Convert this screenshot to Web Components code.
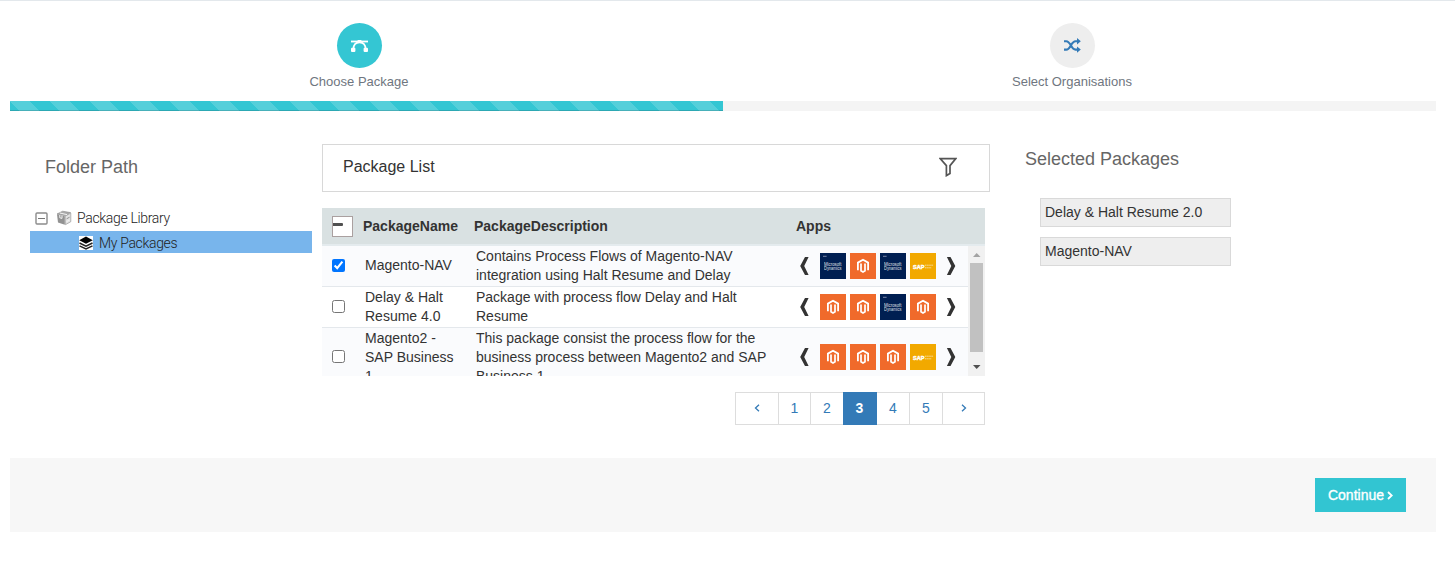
<!DOCTYPE html>
<html lang="en"><head><meta charset="utf-8"><title>Package Sharing</title>
<style>html,body{margin:0;background:#fff}body{font-family:"Liberation Sans",Arial,sans-serif;font-size:14px;color:#333}</style></head>
<body><package-wizard></package-wizard>
<script>
function define(name, css, html) {
  customElements.define(name, class extends HTMLElement {
    constructor() {
      super();
      this.attachShadow({ mode: 'open' }).innerHTML = `<style>*{box-sizing:border-box}${css}</style>` + (typeof html === 'function' ? html(this) : html);
    }
  });
}

define('wizard-step', `
:host{display:flex;flex-direction:column;align-items:center;padding:22px 14px 0 0;height:100px;box-sizing:border-box;color:#6f7680}
.c{width:45px;height:45px;border-radius:50%;background:#eee;display:flex;align-items:center;justify-content:center}
:host([active]) .c{background:#34c6d3}
.l{font-size:13px;line-height:18px;margin:5px 1px 0 0}`,
'<div class="c"><slot name="icon"></slot></div><div class="l"><slot></slot></div>');

define('step-progress', `
:host{display:block;height:10px;background:#f4f4f4}
div{width:50%;height:10px;background:linear-gradient(45deg,rgba(255,255,255,.16) 25%,transparent 25%,transparent 50%,rgba(255,255,255,.16) 50%,rgba(255,255,255,.16) 75%,transparent 75%) 0 0/40px 40px #34c6d3;box-shadow:inset 0 -1px 0 rgba(0,0,0,.15)}`, '<div></div>');

define('folder-tree', `
:host{display:block;width:282px}
h2{font-weight:400;font-size:18px;line-height:22px;margin:12px 0 0 15px;color:#666}
.r{height:22px;display:flex;align-items:center;font:300 14px/22px Roboto,sans-serif;color:#222;letter-spacing:-.33px}
.a{margin-top:29px;padding-left:5px;height:22px}
.b{margin-top:2px;background:#78b5ec;padding-left:49px}
.b svg,.b span{margin-top:2px}
.a .box{margin:0 5px 0 8px}.b svg{margin-right:6px}`,
`<h2>Folder Path</h2>
<div class="r a"><svg width="13" height="13"><rect x="1" y="1" width="11" height="11" rx="1" fill="#fff" stroke="#8c8c8c" stroke-width="1.4"/><path d="M3 6.5h7" stroke="#777"/></svg>
<svg class="box" width="16" height="16" viewBox="0 0 16 16"><path d="M1 4 6.6 1.2l8 1.4-5.4 3.2z" fill="#aaa" stroke="#888" stroke-width=".6"/><path d="m1 4.2 7.8 2v8.6L2 12.4z" fill="#929292"/><path d="m9.2 6.2 5.6-3.1v8.6l-5.4 3z" fill="#e2e2e2" stroke="#999" stroke-width=".7"/><path d="m3.8 3 7.2 1.6M3.8 5v2.8l2.2.6V5.6M10.6 11.6l3-1.5" stroke="#f4f4f4" fill="none"/><path d="m10.6 8.8 3-1.6" stroke="#888" stroke-width=".9"/></svg><span>Package Library</span></div>
<div class="r b"><svg width="14" height="14" viewBox="0 0 14 14"><path fill="#fff" d="M0 0h14v14H0z"/><path d="m7 .6 6.8 3.6L7 7.8.2 4.2z"/><path d="m.5 7 6.5 3.2L13.5 7M.5 9.8 7 13l6.5-3.2" fill="none" stroke="#222" stroke-width="1.5"/></svg><span>My Packages</span></div>`);

define('list-toolbar', `
:host{display:flex;box-sizing:border-box;width:668px;height:48px;border:1px solid #d8d8d8;align-items:center;justify-content:space-between;padding:0 32px 2px 20px;font-size:16px}
svg{display:block}`,
`<slot></slot><svg width="18" height="20" viewBox="0 0 18 20"><path d="M1.2 1.6h15.6L11 8.6v7.8L7.4 18.6v-10z" fill="none" stroke="#555" stroke-width="1.7"/></svg>`);

define('app-icon', `:host,svg{display:block}:host{width:26px;height:26px}text{font-family:"Liberation Sans",Arial,sans-serif;fill:#fff}`, el => ({
m: '<svg width="26" height="26"><path fill="#f06a2b" d="M0 0h26v26H0z"/><path d="M7.9 17.2V9.6L13 6.7l5.1 2.9v7.6" fill="none" stroke="#fff" stroke-width="1.8"/><path d="M11 10.4v7.4l2 1.2 2-1.2v-7.4" fill="none" stroke="#fff" stroke-width="1.7"/></svg>',
d: '<svg width="26" height="26"><path fill="#001f52" d="M0 0h26v26H0z"/><path d="M3 3.3h3.6" stroke="#7888a8"/><text x="4" y="13" font-size="4.8" opacity=".85" textLength="17.5" lengthAdjust="spacingAndGlyphs">Microsoft</text><text x="4" y="17" font-size="4.8" opacity=".85" textLength="17.5" lengthAdjust="spacingAndGlyphs">Dynamics</text></svg>',
s: '<svg width="26" height="26"><path fill="#f2a900" d="M0 0h26v26H0z"/><text x="3" y="15.7" font-size="6" font-weight="bold" stroke="#fff" stroke-width=".4" textLength="11.5" lengthAdjust="spacingAndGlyphs">SAP</text><path d="M15 12.2h8.5M15 14.8h6.5" stroke="#fff" opacity=".6" stroke-dasharray="1.6 .5"/></svg>'
})[el.getAttribute('kind')]);

define('app-strip', `:host{display:flex;align-items:center;margin-bottom:1px}.g{display:flex;gap:4px;margin:0 10px 0 11px}.p{margin-left:1px}`, el =>
`<svg class="p" width="9" height="18" viewBox="0 0 9 18"><path d="M5 0h3.6L4.2 9l4.4 9H5L.2 9z" fill="#333"/></svg><div class="g">${[...el.getAttribute('apps')].map(k => `<app-icon kind="${k}"></app-icon>`).join('')}</div><svg width="10" height="18" viewBox="0 0 10 18"><path d="M4.5 0H.9l4.4 9-4.4 9h3.6l4.8-9z" fill="#333"/></svg>`);

define('package-row', `
:host{display:grid;box-sizing:border-box;grid-template-columns:43px 111px 323px auto;align-items:center;justify-content:start;line-height:19px;padding:1px 0;border-bottom:1px solid #e4e8ec;background:#fff}
:host(:nth-of-type(odd)){background:#fafbfd}
input{display:block;margin:0 0 1.5px 10px;width:13px;height:13px}
::slotted(*){display:block}::slotted(.single){margin-bottom:1px}`,
el => `<input type="checkbox" aria-label="Select package" ${el.hasAttribute('checked') ? 'checked' : ''}><slot name="n"></slot><slot></slot><app-strip apps="${el.getAttribute('apps')}"></app-strip>`);

define('package-table', `
:host{display:block;width:663px;margin-top:16px}
.h{display:grid;grid-template-columns:41px 111px 322px auto;align-items:center;height:38px;background:#d9e1e2;border-bottom:2px solid #e4ebee;font-weight:700}
.k{width:21px;height:21px;border:1px solid #aaa0a0;background:#fff;margin-left:10px;padding-top:6px}
.k:before{content:"";display:block;width:10px;height:3px;border-radius:0 1px 1px 0;background:#505050}
.v{display:flex;height:130px;overflow:hidden}.rows{flex:1;height:140px}
.s{width:17px;height:130px;background:#f1f1f1;display:flex;flex-direction:column;align-items:center}
.t{width:13px;height:89px;background:#c1c1c1}`,
`<div class="h"><div class="k"></div><span>PackageName</span><span>PackageDescription</span><span>Apps</span></div>
<div class="v"><div class="rows"><slot></slot></div><div class="s"><svg width="17" height="17"><path d="M5 11h7.5L8.7 7z" fill="#a3a3a3"/></svg><div class="t"></div><svg width="17" height="24"><path d="M5 13h7.5l-3.8 4z" fill="#505050"/></svg></div></div>`);

define('page-nav', `
:host{display:flex;justify-content:flex-end;width:663px;margin-top:16px}
div{display:flex;border:1px solid #ddd;height:33px;width:250px}
span{display:flex;align-items:center;justify-content:center;border-right:1px solid #ddd;color:#337ab7;width:33px;padding-bottom:1px}
span:first-child{width:43px}span:nth-child(2){width:32px}span:last-child{border:0;flex:1}
.on{background:#337ab7;color:#fff;margin:-1px 0 -1px -1px;width:34px;border-color:#337ab7;font-weight:bold}`,
`<div><span><svg width="6" height="8"><path d="M5 .8 1.5 4 5 7.2" fill="none" stroke="#337ab7" stroke-width="1.3"/></svg></span><span>1</span><span>2</span><span class="on">3</span><span>4</span><span>5</span><span><svg width="6" height="8"><path d="M1 .8 4.5 4 1 7.2" fill="none" stroke="#337ab7" stroke-width="1.3"/></svg></span></div>`);

define('selected-packages', `
:host{display:block;width:206px;margin-left:35px}
h2{font-weight:400;font-size:18px;line-height:22px;margin:4px 0 28px;color:#666}
::slotted(div){box-sizing:border-box;margin:0 0 10px 15px;height:29px;border:1px solid #d9d9d9;background:#eee;padding:0 4px;line-height:27px}`,
'<h2>Selected Packages</h2><slot></slot>');

define('wizard-footer', `
:host{display:flex;box-sizing:border-box;justify-content:flex-end;align-items:center;height:74px;background:#f7f7f7;padding-right:30px}
button{all:unset;box-sizing:border-box;width:91px;height:34px;background:#32c5d2;color:#fff;font-size:14px;display:flex;align-items:center;justify-content:center;gap:3px;-webkit-text-stroke:.35px #fff}`,
`<button><slot></slot><svg width="6" height="9"><path d="m1 1 3.7 3.5L1 8" fill="none" stroke="#fff" stroke-width="1.8"/></svg></button>`);

define('package-wizard', `
:host{display:block;border-top:1px solid #e3e8ec;padding:0 19px 0 10px}
.steps{display:grid;grid-template-columns:1fr 1fr}
.main{display:flex;height:314px;margin-top:33px;padding-left:20px}
.list{margin-left:10px}`,
`<div class="steps"><wizard-step active><svg slot="icon" width="19" height="14" viewBox="0 0 19 14"><path d="M1 2.5h17" stroke="#fff" stroke-width="1.8"/><path d="M3.3 10.5C3.3 6 6 3.2 9.5 3.2s6.2 2.8 6.2 7.3" fill="none" stroke="#fff" stroke-width="1.9"/><path d="M7.6 1h3.8v3H7.6z" fill="#fff"/><rect x="1" y="8.8" width="4.4" height="4.2" rx="1" fill="#fff"/><rect x="13.6" y="8.8" width="4.4" height="4.2" rx="1" fill="#fff"/></svg>Choose Package</wizard-step>
<wizard-step><svg slot="icon" width="17" height="15" viewBox="0 0 17 15"><path d="M0 3.3h2.2C6.8 3.3 7 11.6 11.5 11.6H14M0 11.6h2.2C6.8 11.6 7 3.3 11.5 3.3H14" fill="none" stroke="#337ab7" stroke-width="2.1"/><path d="m13 .1 3.8 3.2L13 6.5zM13 8.4l3.8 3.2-3.8 3.2z" fill="#337ab7"/></svg>Select Organisations</wizard-step></div>
<step-progress></step-progress>
<div class="main"><folder-tree></folder-tree><div class="list"><list-toolbar>Package List</list-toolbar>
<package-table>
<package-row checked apps="dmds"><span slot="n" class="single">Magento-NAV</span>Contains Process Flows of Magento-NAV<br>integration using Halt Resume and Delay</package-row>
<package-row apps="mmdm"><span slot="n">Delay &amp; Halt<br>Resume 4.0</span>Package with process flow Delay and Halt<br>Resume</package-row>
<package-row apps="mmms"><span slot="n">Magento2 -<br>SAP Business<br>1</span>This package consist the process flow for the<br>business process between Magento2 and SAP<br>Business 1</package-row>
</package-table><page-nav></page-nav></div>
<selected-packages><div>Delay &amp; Halt Resume 2.0</div><div>Magento-NAV</div></selected-packages></div>
<wizard-footer>Continue</wizard-footer>`);
</script></body></html>
